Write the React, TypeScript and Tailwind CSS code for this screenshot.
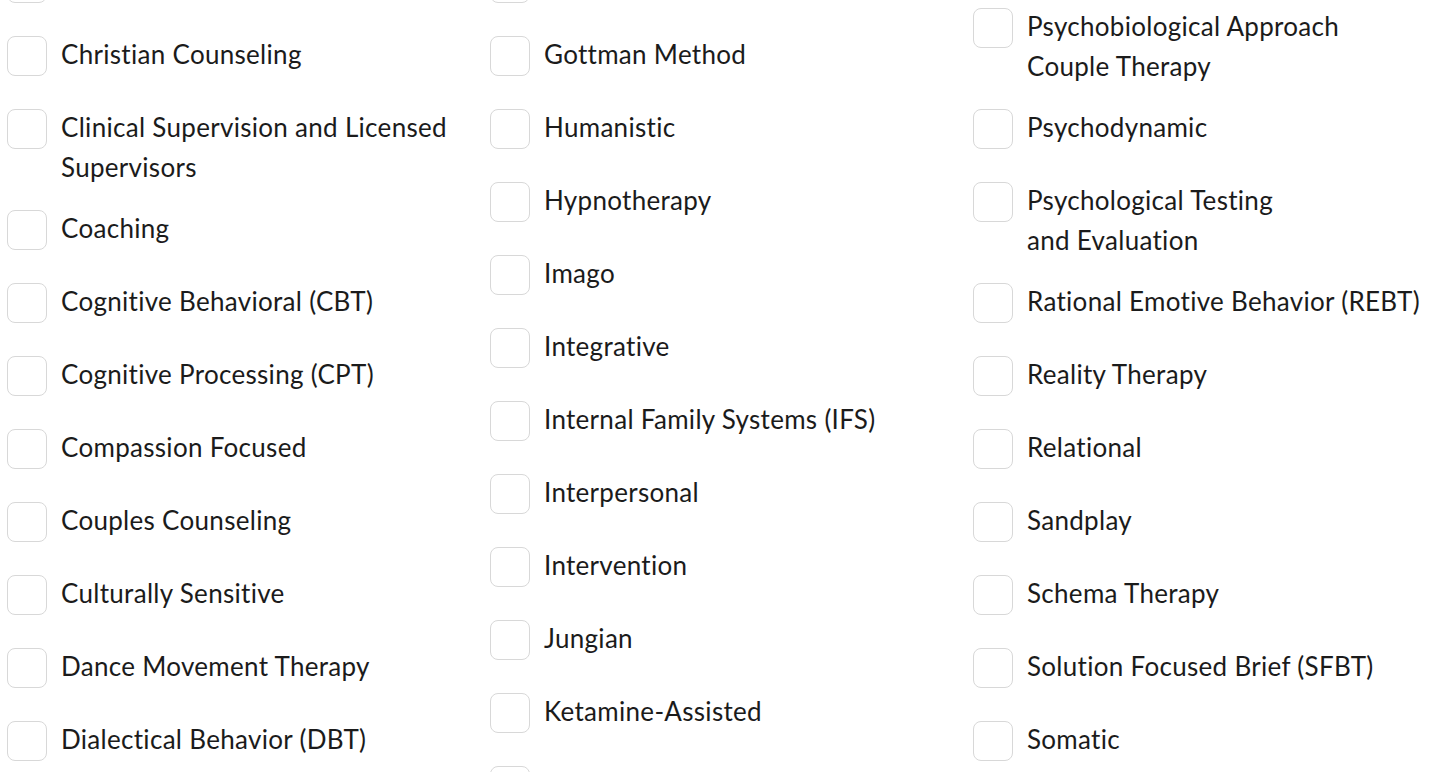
import { useState } from 'react'

type Item = { id: string; lines: string[] }

// rows that sit half outside the view show only their box edge
const col1: Item[] = [
  { id: 'prev1', lines: [] },
  { id: 'christian', lines: ['Christian Counseling'] },
  { id: 'clinical', lines: ['Clinical Supervision and Licensed', 'Supervisors'] },
  { id: 'coaching', lines: ['Coaching'] },
  { id: 'cbt', lines: ['Cognitive Behavioral (CBT)'] },
  { id: 'cpt', lines: ['Cognitive Processing (CPT)'] },
  { id: 'compassion', lines: ['Compassion Focused'] },
  { id: 'couples', lines: ['Couples Counseling'] },
  { id: 'cultural', lines: ['Culturally Sensitive'] },
  { id: 'dance', lines: ['Dance Movement Therapy'] },
  { id: 'dbt', lines: ['Dialectical Behavior (DBT)'] },
]

const col2: Item[] = [
  { id: 'prev2', lines: [] },
  { id: 'gottman', lines: ['Gottman Method'] },
  { id: 'humanistic', lines: ['Humanistic'] },
  { id: 'hypno', lines: ['Hypnotherapy'] },
  { id: 'imago', lines: ['Imago'] },
  { id: 'integrative', lines: ['Integrative'] },
  { id: 'ifs', lines: ['Internal Family Systems (IFS)'] },
  { id: 'interpersonal', lines: ['Interpersonal'] },
  { id: 'intervention', lines: ['Intervention'] },
  { id: 'jungian', lines: ['Jungian'] },
  { id: 'ketamine', lines: ['Ketamine-Assisted'] },
  { id: 'next2', lines: [] },
]

const col3: Item[] = [
  { id: 'psychobio', lines: ['Psychobiological Approach', 'Couple Therapy'] },
  { id: 'psychodynamic', lines: ['Psychodynamic'] },
  { id: 'testing', lines: ['Psychological Testing', 'and Evaluation'] },
  { id: 'rebt', lines: ['Rational Emotive Behavior (REBT)'] },
  { id: 'reality', lines: ['Reality Therapy'] },
  { id: 'relational', lines: ['Relational'] },
  { id: 'sandplay', lines: ['Sandplay'] },
  { id: 'schema', lines: ['Schema Therapy'] },
  { id: 'sfbt', lines: ['Solution Focused Brief (SFBT)'] },
  { id: 'somatic', lines: ['Somatic'] },
]

export default function App() {
  const [checked, setChecked] = useState<Record<string, boolean>>({})

  const toggle = (id: string) =>
    setChecked((prev) => ({ ...prev, [id]: !prev[id] }))

  return (
    <div
      className="w-[1456px] h-[772px] overflow-hidden bg-white text-[#1b1b1b]"
      style={{ fontFamily: 'Lato, "Open Sans", sans-serif' }}
    >
      <div className="grid grid-cols-3 pl-[7px] -mt-[37px]">
        <Column items={col1} checked={checked} onToggle={toggle} />
        <Column items={col2} checked={checked} onToggle={toggle} />
        <div className="mt-[45px]">
          <Column items={col3} checked={checked} onToggle={toggle} />
        </div>
      </div>
    </div>
  )
}

// ------------- Column -------------
interface ColumnProps {
  items: Item[]
  checked: Record<string, boolean>
  onToggle: (id: string) => void
}

function Column({ items, checked, onToggle }: ColumnProps) {
  return (
    <div className="flex flex-col gap-[21px]">
      {items.map((item) => (
        <label
          key={item.id}
          className="flex items-start gap-[14px] cursor-pointer select-none"
          onClick={() => onToggle(item.id)}
        >
          {/* Checkbox */}
          <span
            className={`
              flex-shrink-0 w-[40px] h-[40px] mb-3 rounded-[8px] border-[1.5px]
              ${checked[item.id] ? 'bg-[#1b1b1b] border-[#1b1b1b]' : 'bg-white border-[#d8d8d8]'}
            `}
          />
          {/* Label */}
          <span className="-mt-[2px] mb-[2px] text-[26px] leading-[40px] tracking-[0.3px] whitespace-nowrap">
            {item.lines.map((line) => (
              <span key={line} className="block">
                {line}
              </span>
            ))}
          </span>
        </label>
      ))}
    </div>
  )
}
